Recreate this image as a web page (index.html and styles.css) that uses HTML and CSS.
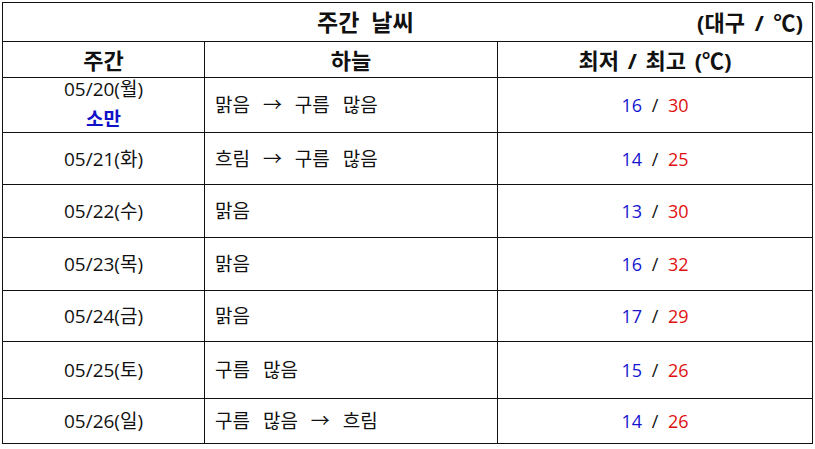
FILE: index.html
```html
<!DOCTYPE html>
<html lang="ko">
<head>
<meta charset="utf-8">
<link rel="stylesheet" href="styles.css">
</head>
<body>
<table class="weather">
  <colgroup>
    <col class="c-date">
    <col class="c-sky">
    <col class="c-temp">
  </colgroup>
  <tr class="title-row">
    <td colspan="3" class="title">
      <div class="title-inner">
        <span class="title-main">주간 날씨</span>
        <span class="title-loc">(대구 / ℃)</span>
      </div>
    </td>
  </tr>
  <tr class="head-row">
    <th>주간</th>
    <th>하늘</th>
    <th>최저 / 최고 (℃)</th>
  </tr>
  <tr class="r1">
    <td class="date">
      <div class="date-stack">
        <span class="date-line">05/20(월)</span>
        <span class="date-line term">소만</span>
      </div>
    </td>
    <td class="sky">맑음 → 구름 많음</td>
    <td class="temp"><span class="lo">16</span> / <span class="hi">30</span></td>
  </tr>
  <tr class="r2">
    <td class="date">05/21(화)</td>
    <td class="sky">흐림 → 구름 많음</td>
    <td class="temp"><span class="lo">14</span> / <span class="hi">25</span></td>
  </tr>
  <tr class="r3">
    <td class="date">05/22(수)</td>
    <td class="sky">맑음</td>
    <td class="temp"><span class="lo">13</span> / <span class="hi">30</span></td>
  </tr>
  <tr class="r4">
    <td class="date">05/23(목)</td>
    <td class="sky">맑음</td>
    <td class="temp"><span class="lo">16</span> / <span class="hi">32</span></td>
  </tr>
  <tr class="r5">
    <td class="date">05/24(금)</td>
    <td class="sky">맑음</td>
    <td class="temp"><span class="lo">17</span> / <span class="hi">29</span></td>
  </tr>
  <tr class="r6">
    <td class="date">05/25(토)</td>
    <td class="sky">구름 많음</td>
    <td class="temp"><span class="lo">15</span> / <span class="hi">26</span></td>
  </tr>
  <tr class="r7">
    <td class="date">05/26(일)</td>
    <td class="sky">구름 많음 → 흐림</td>
    <td class="temp"><span class="lo">14</span> / <span class="hi">26</span></td>
  </tr>
</table>
</body>
</html>
```
FILE: styles.css
```css
html, body {
  margin: 0;
  padding: 0;
  background: #fff;
}
body {
  padding: 2px 0 0 2px;
  font-family: "Open Sans", "Noto Sans CJK KR", sans-serif;
  color: #111;
}
.weather {
  border-collapse: collapse;
  table-layout: fixed;
  width: 810px;
}
.c-date { width: 202px; }
.c-sky { width: 293px; }
.c-temp { width: 315px; }
.weather td, .weather th {
  border: 1px solid #111;
  padding: 0;
  font-size: 19px;
  line-height: 22px;
  font-weight: normal;
  vertical-align: middle;
}
.title-row { height: 39px; }
.head-row { height: 36px; }
.r1 { height: 55px; }
.r2 { height: 52px; }
.r3 { height: 53px; }
.r4 { height: 53px; }
.r5 { height: 51px; }
.r6 { height: 57px; }
.r7 { height: 45px; }
.title-inner {
  display: flex;
  align-items: center;
  height: 38px;
  padding-left: 314px;
  padding-right: 9px;
}
.title-main {
  font-size: 23px;
  font-weight: bold;
  word-spacing: 6px;
}
.title-loc {
  margin-left: auto;
  font-size: 22px;
  font-weight: bold;
  word-spacing: 4px;
}
.head-row th {
  font-size: 22px;
  font-weight: bold;
  text-align: center;
  word-spacing: 3px;
}
.date {
  text-align: center;
}
.date-stack {
  display: flex;
  flex-direction: column;
  align-items: center;
  gap: 8px;
  margin-top: -2px;
}
.date-line {
  line-height: 22px;
  height: 22px;
}
.term {
  color: #1010c8;
  font-weight: bold;
}
.sky {
  padding-left: 10px !important;
  word-spacing: 8px;
}
.temp {
  text-align: center;
  font-size: 18px !important;
  word-spacing: 5px;
}
.lo { color: #1515d0; }
.hi { color: #e01010; }
```
